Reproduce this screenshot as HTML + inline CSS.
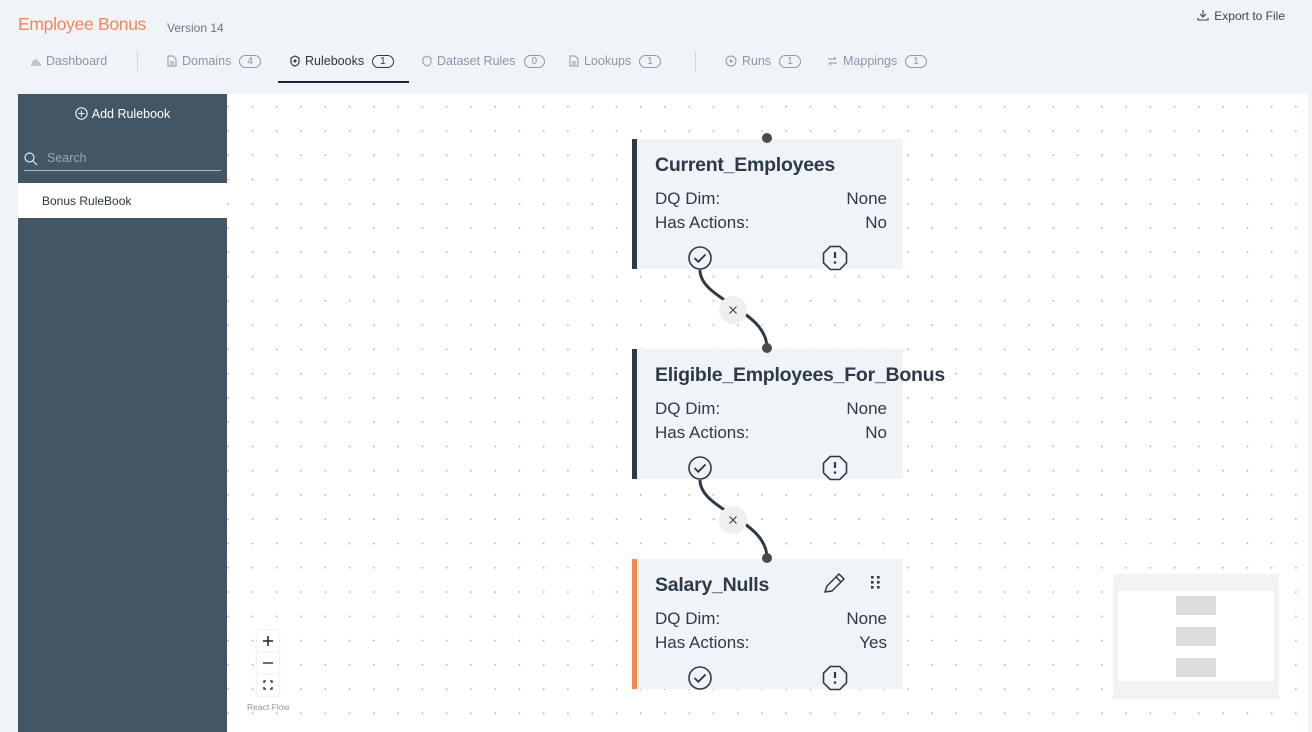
<!DOCTYPE html>
<html><head><meta charset="utf-8"><style>
*{margin:0;padding:0;box-sizing:border-box}
body{width:1312px;height:732px;overflow:hidden;background:#f0f3f8;font-family:"Liberation Sans",sans-serif;position:relative}
.abs{position:absolute}
.title{left:18px;top:14px;font-size:17.5px;color:#f0875f;font-weight:300;letter-spacing:-0.3px}
.ver{left:167px;top:21px;font-size:12px;color:#6b7786}
.exp{right:27px;top:9px;font-size:12px;color:#3a4452}
.tab{top:54px;font-size:12.5px;color:#8c97a8;display:flex;align-items:center;gap:5px}
.tab.act{color:#2c3644}
.badge{display:inline-block;border:1px solid #8c97a8;border-radius:8px;font-size:10px;line-height:11px;padding:0 7px;margin-left:3px;color:#8c97a8}
.act .badge{border-color:#2c3644;color:#2c3644}
.sep{top:51px;width:1px;height:20px;background:#cfd5dd}
.side{left:18px;top:94px;width:209px;height:638px;background:#435666}
.canvas{left:227px;top:94px;width:1081px;height:638px;background-color:#fff;background-image:radial-gradient(circle,#b9b9b9 0.9px,transparent 1.1px);background-size:24.27px 24.27px;background-position:-10.9px 0.6px}
.strip{left:1308px;top:94px;width:4px;height:638px;background:#f0f3f8}
.node{left:632px;width:271px;height:130px;background:#f0f3f8;border-left:5px solid #2c3a48}
.node .t{position:absolute;left:18px;top:15px;font-size:19.5px;font-weight:bold;color:#2c3a4a;letter-spacing:-0.25px;white-space:nowrap}
.node .r{position:absolute;left:18px;right:16px;font-size:17px;color:#2c3a4a;display:flex;justify-content:space-between}
</style></head><body>
<div class="abs title">Employee Bonus</div>
<div class="abs ver">Version 14</div>
<div class="abs exp"><svg width="12" height="12" viewBox="0 0 12 12" style="vertical-align:-1px;margin-right:5px"><path d="M6 1v7M3 5l3 3 3-3M1 9v2h10V9" fill="none" stroke="#3a4452" stroke-width="1.1"/></svg>Export to File</div>

<div class="abs tab" style="left:30px"><svg width="11" height="10"><path d="M1 9h10M3 8V5M5 8V3M7 8V4M9 8V6" stroke="#8c97a8" stroke-width="1"/></svg>Dashboard</div>
<div class="abs sep" style="left:137px"></div>
<div class="abs tab" style="left:167px"><svg width="10" height="12"><path d="M1 1h5l3 3v7H1z M3 7h4M3 9h4" fill="none" stroke="#8c97a8"/></svg>Domains<span class="badge">4</span></div>
<div class="abs tab act" style="left:290px"><svg width="10" height="12"><path d="M5 1l4 2v4c0 2-2 3.5-4 4-2-.5-4-2-4-4V3z" fill="none" stroke="#2c3644" stroke-width="1.2"/><circle cx="5" cy="6" r="1.5" fill="#2c3644"/></svg>Rulebooks<span class="badge">1</span></div>
<div class="abs" style="left:278px;top:81px;width:131px;height:2px;background:#1c2330"></div>
<div class="abs tab" style="left:422px"><svg width="10" height="12"><path d="M5 1l4 2v4c0 2-2 3.5-4 4-2-.5-4-2-4-4V3z" fill="none" stroke="#8c97a8"/></svg>Dataset Rules<span class="badge">0</span></div>
<div class="abs tab" style="left:569px"><svg width="10" height="12"><path d="M1 1h5l3 3v7H1z M3 7h4M3 9h4" fill="none" stroke="#8c97a8"/></svg>Lookups<span class="badge">1</span></div>
<div class="abs sep" style="left:695px"></div>
<div class="abs tab" style="left:725px"><svg width="12" height="12"><circle cx="6" cy="6" r="5" fill="none" stroke="#8c97a8"/><path d="M5 4l3 2-3 2z" fill="#8c97a8"/></svg>Runs<span class="badge">1</span></div>
<div class="abs tab" style="left:827px"><svg width="11" height="10"><path d="M1 3h8M7 1l2 2M10 7H2M4 9L2 7" fill="none" stroke="#8c97a8"/></svg>Mappings<span class="badge">1</span></div>

<div class="abs side">
 <div class="abs" style="left:0;width:209px;top:13px;text-align:center;color:#fff;font-size:12.5px"><svg width="13" height="13" viewBox="0 0 13 13" style="vertical-align:-2px;margin-right:4px"><circle cx="6.5" cy="6.5" r="5.7" fill="none" stroke="#fff"/><path d="M6.5 3.5v6M3.5 6.5h6" stroke="#fff"/></svg>Add Rulebook</div>
 <svg class="abs" style="left:6px;top:58px" width="14" height="14"><circle cx="5.5" cy="5.5" r="4.5" fill="none" stroke="#e0e6ec" stroke-width="1.2"/><path d="M9 9l4 4" stroke="#e0e6ec" stroke-width="1.2"/></svg>
 <div class="abs" style="left:29px;top:57px;font-size:12.5px;color:#9aa8b5">Search</div>
 <div class="abs" style="left:6px;top:76px;width:197px;height:1px;background:#a8b4bf"></div>
 <div class="abs" style="left:0;top:89px;width:209px;height:35px;background:#fff;font-size:12px;color:#2c3644;padding:11px 0 0 24px">Bonus RuleBook</div>
</div>

<div class="abs canvas"></div>
<div class="abs strip"></div>

<svg class="abs" style="left:0;top:0" width="1312" height="732">
 <path d="M700 270 C700 300 767 310 767 348" fill="none" stroke="#2c3a48" stroke-width="3"/>
 <path d="M700 480 C700 510 767 520 767 558" fill="none" stroke="#2c3a48" stroke-width="3"/>
 <circle cx="733" cy="310" r="14" fill="#efefef"/>
 <circle cx="733" cy="520" r="14" fill="#efefef"/>
 <path d="M729.5 306.5l7 7M736.5 306.5l-7 7M729.5 516.5l7 7M736.5 516.5l-7 7" stroke="#444" stroke-width="1.2"/>
</svg>

<div class="abs node" style="top:139px"><div class="t">Current_Employees</div></div>
<div class="abs node" style="top:349px"><div class="t">Eligible_Employees_For_Bonus</div></div>
<div class="abs node" style="top:559px;border-left-color:#f08a47"><div class="t">Salary_Nulls</div></div>

<svg class="abs" style="left:0;top:0" width="1312" height="732">
 <defs>
  <g id="chk"><circle cx="0" cy="0" r="11" fill="none" stroke="#2c3a48" stroke-width="1.6"/><path d="M-5.5 0l3.8 3.8L5.5-3.5" fill="none" stroke="#2c3a48" stroke-width="1.9"/></g>
  <g id="oct"><path d="M-4.8-11.5h9.6l6.7 6.7v9.6l-6.7 6.7h-9.6l-6.7-6.7v-9.6z" fill="none" stroke="#2c3a48" stroke-width="1.6"/><path d="M0-6v6" stroke="#2c3a48" stroke-width="2.2"/><circle cx="0" cy="4.5" r="1.3" fill="#2c3a48"/></g>
 </defs>
 <use href="#chk" x="700" y="258"/><use href="#oct" x="835" y="258"/>
 <use href="#chk" x="700" y="468"/><use href="#oct" x="835" y="468"/>
 <use href="#chk" x="700" y="678"/><use href="#oct" x="835" y="678"/>
 <circle cx="767" cy="138" r="5" fill="#4a4a4a"/>
 <circle cx="767" cy="348" r="5" fill="#4a4a4a"/>
 <circle cx="767" cy="558" r="5" fill="#4a4a4a"/>
 <path d="M825 592l2-6 12-12 5 5-12 12z M836 577l5 5" fill="none" stroke="#2c3a48" stroke-width="1.5" stroke-linejoin="round"/>
 <g fill="#2c3a48"><rect x="871" y="576" width="2.6" height="2.6"/><rect x="877" y="576" width="2.6" height="2.6"/><rect x="871" y="581" width="2.6" height="2.6"/><rect x="877" y="581" width="2.6" height="2.6"/><rect x="871" y="586" width="2.6" height="2.6"/><rect x="877" y="586" width="2.6" height="2.6"/></g>
</svg>

<div class="abs node" style="top:139px;background:transparent;border-color:transparent">
 <div class="r" style="top:50px"><span>DQ Dim:</span><span>None</span></div>
 <div class="r" style="top:74px"><span>Has Actions:</span><span>No</span></div></div>
<div class="abs node" style="top:349px;background:transparent;border-color:transparent">
 <div class="r" style="top:50px"><span>DQ Dim:</span><span>None</span></div>
 <div class="r" style="top:74px"><span>Has Actions:</span><span>No</span></div></div>
<div class="abs node" style="top:559px;background:transparent;border-color:transparent">
 <div class="r" style="top:50px"><span>DQ Dim:</span><span>None</span></div>
 <div class="r" style="top:74px"><span>Has Actions:</span><span>Yes</span></div></div>

<div class="abs" style="left:257px;top:630px;width:22px;height:66px;background:#fefefe;box-shadow:0 0 2px rgba(0,0,0,.15)">
 <svg width="22" height="66"><path d="M6 11h10M11 6v10" stroke="#222" stroke-width="1.5"/><line x1="0" y1="22" x2="22" y2="22" stroke="#eee"/><path d="M6 33h10" stroke="#222" stroke-width="1.3"/><line x1="0" y1="44" x2="22" y2="44" stroke="#eee"/><path d="M7 53v-2h2M13 51h2v2M15 57v2h-2M9 59H7v-2" fill="none" stroke="#222" stroke-width="1.3"/></svg>
</div>
<div class="abs" style="left:247px;top:702px;font-size:8.5px;color:#8c97a8">React Flow</div>

<div class="abs" style="left:1113px;top:574px;width:166px;height:125px;background:#f2f3f3"></div>
<div class="abs" style="left:1118px;top:591px;width:156px;height:90px;background:#fff"></div>
<div class="abs" style="left:1176px;top:596px;width:40px;height:19px;background:#dcdcdc"></div>
<div class="abs" style="left:1176px;top:627px;width:40px;height:19px;background:#dcdcdc"></div>
<div class="abs" style="left:1176px;top:658px;width:40px;height:19px;background:#dcdcdc"></div>
</body></html>
